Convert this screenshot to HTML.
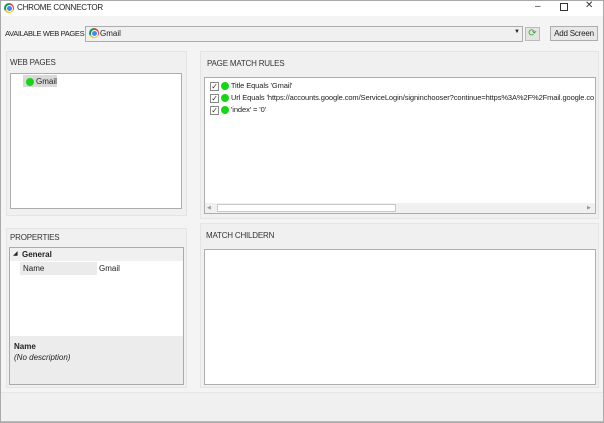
<!DOCTYPE html>
<html><head><style>
*{box-sizing:border-box;margin:0;padding:0}
body{width:604px;height:423px;position:relative;overflow:hidden;background:#f4f4f4;font-family:"Liberation Sans",sans-serif;font-size:8px;color:#222}
.a{position:absolute}
.hdr{font-size:8px;color:#333;letter-spacing:-0.2px}
.panel{background:#f0f0f0;border:1px solid #e4e4e4}
.box{background:#fff;border:1px solid #adadad}
.dot{display:inline-block;width:8px;height:8px;border-radius:50%;background:#14d614;vertical-align:middle}
.cb{display:inline-block;width:9px;height:9px;border:1px solid #888;background:#fff;vertical-align:middle;font-size:8px;line-height:7px;text-align:center;color:#333}
.rule{position:absolute;left:5px;white-space:nowrap;font-size:7.5px;letter-spacing:-0.1px}
.chrome{display:inline-block;width:10px;height:10px;border-radius:50%;background:conic-gradient(#db4437 0 120deg,#f4b400 120deg 240deg,#0f9d58 240deg 360deg);position:relative;vertical-align:middle}
.chrome::after{content:"";position:absolute;left:2.5px;top:2.5px;width:5px;height:5px;border-radius:50%;background:#4285f4;box-shadow:0 0 0 1px #fff}
</style></head><body>
<div class="a" style="left:0;top:0;width:604px;height:423px;border:1px solid #aaa;z-index:5;pointer-events:none"></div>
<div class="a" style="left:0;top:0;width:604px;height:16px;background:#fff"></div>
<div class="a" style="left:4px;top:3px"><span class="chrome"></span></div>
<div class="a" style="left:17px;top:3px;font-size:8px;letter-spacing:-0.2px">CHROME CONNECTOR</div>
<div class="a" style="left:535px;top:1px;font-size:10px;color:#333">–</div>
<div class="a" style="left:560px;top:3px;width:8px;height:8px;border:1px solid #333"></div>
<div class="a" style="left:585px;top:0px;font-size:10px;color:#333">✕</div>

<div class="a" style="left:5px;top:29px;font-size:7.5px;letter-spacing:-0.35px">AVAILABLE WEB PAGES</div>
<div class="a" style="left:85px;top:26px;width:438px;height:16px;background:#f0f0f0;border:1px solid #adadad"></div>
<div class="a" style="left:89px;top:28px"><span class="chrome"></span></div>
<div class="a" style="left:100px;top:29px">Gmail</div>
<div class="a" style="left:514px;top:29px;font-size:6px">▼</div>
<div class="a" style="left:525px;top:27px;width:15px;height:14px;background:#e4e4e4;border:1px solid #bbb;color:#3a3;font-size:10px;line-height:12px;text-align:center">⟳</div>
<div class="a" style="left:550px;top:26px;width:48px;height:15px;background:#e8e8e8;border:1px solid #adadad;text-align:center;line-height:13px;letter-spacing:-0.2px">Add Screen</div>

<div class="a panel" style="left:6px;top:51px;width:181px;height:165px"></div>
<div class="a hdr" style="left:10px;top:58px">WEB PAGES</div>
<div class="a box" style="left:10px;top:73px;width:172px;height:136px"></div>
<div class="a" style="left:23px;top:75px;width:34px;height:12px;background:#d9d9d9"></div>
<div class="a" style="left:26px;top:77px"><span class="dot"></span></div>
<div class="a" style="left:36px;top:77px">Gmail</div>

<div class="a panel" style="left:6px;top:228px;width:181px;height:160px"></div>
<div class="a hdr" style="left:10px;top:233px">PROPERTIES</div>
<div class="a box" style="left:9px;top:247px;width:175px;height:138px;border-color:#aaa"></div>
<div class="a" style="left:10px;top:248px;width:173px;height:88px;background:#fff"></div>
<div class="a" style="left:10px;top:248px;width:173px;height:13px;background:#f0f0f0"></div>
<div class="a" style="left:13px;top:250px;font-size:6px">◢</div>
<div class="a" style="left:22px;top:250px;font-weight:bold">General</div>
<div class="a" style="left:20px;top:262px;width:77px;height:13px;background:#ebebeb"></div>
<div class="a" style="left:23px;top:264px">Name</div>
<div class="a" style="left:99px;top:264px">Gmail</div>
<div class="a" style="left:10px;top:336px;width:173px;height:48px;background:#ececec"></div>
<div class="a" style="left:14px;top:342px;font-weight:bold">Name</div>
<div class="a" style="left:14px;top:353px;font-style:italic">(No description)</div>

<div class="a panel" style="left:200px;top:51px;width:399px;height:168px"></div>
<div class="a hdr" style="left:207px;top:59px">PAGE MATCH RULES</div>
<div class="a box" style="left:204px;top:77px;width:392px;height:137px;overflow:hidden">
<div class="rule" style="top:3px"><span class="cb">✓</span> <span class="dot"></span> Title Equals 'Gmail'</div>
<div class="rule" style="top:15px"><span class="cb">✓</span> <span class="dot"></span> Url Equals 'https://accounts.google.com/ServiceLogin/signinchooser?continue=https%3A%2F%2Fmail.google.co</div>
<div class="rule" style="top:27px"><span class="cb">✓</span> <span class="dot"></span> 'index' = '0'</div>
<div class="a" style="left:0;top:125px;width:390px;height:10px;background:#f0f0f0"></div>
<div class="a" style="left:2px;top:127px;font-size:5px;color:#999">◀</div>
<div class="a" style="left:382px;top:127px;font-size:5px;color:#999">▶</div>
<div class="a" style="left:12px;top:126px;width:179px;height:8px;background:#fff;border:1px solid #c8c8c8"></div>
</div>

<div class="a panel" style="left:200px;top:223px;width:399px;height:165px"></div>
<div class="a hdr" style="left:206px;top:231px">MATCH CHILDERN</div>
<div class="a box" style="left:204px;top:249px;width:392px;height:136px"></div>

<div class="a" style="left:0;top:392px;width:604px;height:31px;background:#f0f0f0;border-top:1px solid #e6e6e6;border-bottom:2px solid #bbb"></div>
</body></html>
